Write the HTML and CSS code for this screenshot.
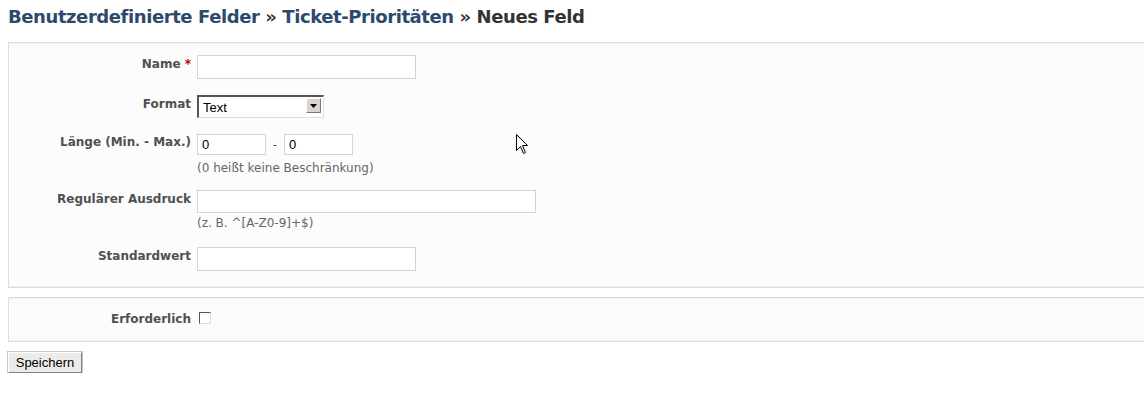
FILE: index.html
```html
<!DOCTYPE html>
<html lang="de">
<head>
    <meta charset="UTF-8">
    <title>Neues Feld</title>
    <link rel="stylesheet" href="styles.css">
</head>
<body>
    <h2 class="title">
        <a href="#">Benutzerdefinierte Felder</a> &raquo;
        <a href="#">Ticket-Prioritäten</a> &raquo; Neues Feld
    </h2>

    <form class="field-form" action="#" method="post">
        <div class="box">
            <div class="row row-name">
                <label for="name">Name <span class="required">*</span></label>
                <input type="text" id="name" class="input-wide">
            </div>

            <div class="row row-format">
                <label for="format">Format</label>
                <span class="select-wrap">
                    <select id="format">
                        <option>Text</option>
                        <option>Ganzzahl</option>
                        <option>Liste</option>
                        <option>Datum</option>
                    </select>
                    <span class="select-btn">
                        <svg width="7" height="4" viewBox="0 0 7 4"><path d="M0 0H7L3.5 4Z" fill="#000"/></svg>
                    </span>
                </span>
            </div>

            <div class="row row-length">
                <label for="min">Länge (Min. - Max.)</label>
                <div class="field">
                    <div class="range">
                        <input type="text" id="min" class="input-small" value="0">
                        <span class="dash">-</span>
                        <input type="text" id="max" class="input-small" value="0">
                    </div>
                    <em class="info">(0 heißt keine Beschränkung)</em>
                </div>
            </div>

            <div class="row row-regex">
                <label for="regex">Regulärer Ausdruck</label>
                <div class="field">
                    <input type="text" id="regex" class="input-long">
                    <em class="info">(z. B. ^[A-Z0-9]+$)</em>
                </div>
            </div>

            <div class="row row-default">
                <label for="default">Standardwert</label>
                <input type="text" id="default" class="input-wide">
            </div>
        </div>

        <div class="box box-small">
            <div class="row row-check">
                <label for="required">Erforderlich</label>
                <input type="checkbox" id="required" class="check">
            </div>
        </div>

        <button type="submit" class="save">Speichern</button>
    </form>

    <svg class="pointer" width="13" height="21" viewBox="0 0 13 21">
        <path d="M0.5 0.5V16.5L4.5 12.5L7.5 19.5L9.5 18.5L6.5 11.5H11.5Z" fill="#fff" stroke="#000" stroke-width="1"/>
    </svg>
</body>
</html>
```

FILE: styles.css
```css
body {
    margin: 0;
    padding: 0 0 0 8px;
    background: #fff;
    font-family: "DejaVu Sans", Verdana, sans-serif;
    font-size: 12px;
    color: #505050;
    overflow: hidden;
}

.title {
    margin: 0;
    padding: 6px 0 0 0;
    height: 36px;
    font-size: 18px;
    font-weight: bold;
    color: #333;
    letter-spacing: -0.42px;
}

.title a {
    color: #2c4a6b;
    text-decoration: none;
}

.box {
    background-color: #fcfcfc;
    border: 1px solid #dcdcdc;
    border-right: none;
    box-shadow: inset 0 1px 0 #f2f2f2, inset 0 -1px 0 #f2f2f2;
    padding: 12px 0 16px 0;
    margin-bottom: 9px;
}

.box-small {
    padding: 12px 0 0 0;
    height: 31px;
    margin-bottom: 10px;
}

.row {
    display: grid;
    grid-template-columns: 182px auto;
    column-gap: 6px;
    align-items: start;
}

.row label {
    text-align: right;
    font-weight: bold;
    color: #505050;
    padding-top: 2px;
    line-height: 15px;
}

.required {
    color: #bb0000;
}

.row-name { margin-bottom: 16px; }
.row-format { margin-bottom: 16px; }
.row-length { margin-bottom: 15px; }
.row-regex { margin-bottom: 17px; }

.row-format label { padding-top: 2px; }
.row-length label { padding-top: 1px; }
.row-check label { padding-top: 2px; }

.field {
    display: flex;
    flex-direction: column;
    align-items: flex-start;
}

input[type="text"] {
    box-sizing: border-box;
    height: 24px;
    margin: 0;
    padding: 2px 3px;
    border: 1px solid #d4d4d4;
    background: #fff;
    font-family: "Liberation Sans", Arial, sans-serif;
    font-size: 13px;
    color: #000;
    outline: none;
}

.input-wide { width: 219px; }
.input-long { width: 339px; height: 23px !important; }

.input-small {
    width: 69px;
    height: 21px !important;
    padding: 1px 4px !important;
}

.range {
    display: flex;
    align-items: center;
}

.dash {
    width: 18px;
    text-align: center;
    color: #505050;
}

.info {
    font-style: normal;
    color: #666;
    font-size: 12px;
    line-height: 14px;
    margin-top: 6px;
}

.row-regex .info { margin-top: 3px; }

.select-wrap {
    position: relative;
    display: inline-block;
    width: 127px;
    height: 23px;
}

.select-wrap select {
    appearance: none;
    -webkit-appearance: none;
    box-sizing: border-box;
    width: 127px;
    height: 23px;
    margin: 0;
    padding: 2px 4px;
    border-style: solid;
    border-color: #555 #ddd #ddd #555;
    border-width: 2px 1px 1px 2px;
    border-radius: 0;
    background: #fff;
    font-family: "Liberation Sans", Arial, sans-serif;
    font-size: 13px;
    color: #000;
}

.select-btn {
    position: absolute;
    top: 3px;
    right: 3px;
    width: 15px;
    height: 15px;
    box-sizing: border-box;
    background: #d8d4cc;
    border: 1px solid;
    border-color: #fff #7a7a7a #7a7a7a #fff;
    display: flex;
    align-items: center;
    justify-content: center;
}

.check {
    appearance: none;
    -webkit-appearance: none;
    width: 12px;
    height: 12px;
    margin: 2px 0 0 2px;
    box-sizing: border-box;
    border: 1px solid;
    border-color: #555 #ddd #ddd #555;
    background: #fff;
}

.save {
    margin: 0;
    height: 21px;
    width: 74px;
    padding: 0;
    font-family: "Liberation Sans", Arial, sans-serif;
    font-size: 13px;
    color: #000;
    background: #ecebe8;
    border: 1px solid;
    border-color: #fff #808080 #808080 #fff;
    box-shadow: 0 0 0 1px #c8c8c8;
    border-radius: 0;
    cursor: pointer;
}

.pointer {
    position: absolute;
    left: 516px;
    top: 134px;
}
```
